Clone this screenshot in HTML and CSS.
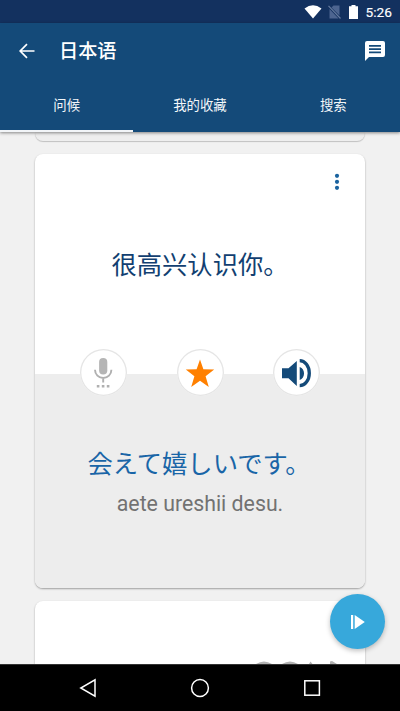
FILE: index.html
```html
<!DOCTYPE html>
<html lang="zh-CN">
<head>
<meta charset="utf-8">
<title>日本语</title>
<link rel="stylesheet" href="styles.css">
</head>
<body>
<div class="screen">
  <div class="status">
    <svg class="wifi" width="18" height="14" viewBox="0 0 18 14"><path d="M0.5 3.5Q9-2.8 17.5 3.5L9 13.5z" fill="#fff"/></svg>
    <svg class="sim" width="13" height="14" viewBox="0 0 13 14"><path d="M5.5 0.5H11.5V10.5L3.5 2.5zM1.5 4L10.5 13.5H1.5z" fill="#4d6590"/><path d="M0.5 0.8L12.5 13.5" stroke="#667b9f" stroke-width="1.2"/></svg>
    <svg class="battery" width="9" height="14" viewBox="0 0 9 14"><path d="M2.5 0h4v1.2H9V14H0V1.2h2.5z" fill="#fff"/></svg>
    <span class="clock">5:26</span>
  </div>
  <header class="appbar">
    <div class="toolbar">
      <svg class="back" width="16" height="16" viewBox="0 0 16 16"><path d="M15.5 8H1.5M8 1.2L1.2 8L8 14.8" fill="none" stroke="#fff" stroke-width="1.7"/></svg>
      <h1>日本语</h1>
      <svg class="chat" width="20" height="20" viewBox="0 0 20 20"><path fill="#fff" fill-rule="evenodd" d="M2 0h16a2 2 0 0 1 2 2v12a2 2 0 0 1-2 2H4l-4 4V2a2 2 0 0 1 2-2zM4 4v1.8h12V4zM4 7.2V9h12V7.2zM4 10.4v1.8h12v-1.8z"/></svg>
    </div>
    <nav class="tabs">
      <span class="tab active">问候</span>
      <span class="tab">我的收藏</span>
      <span class="tab">搜索</span>
    </nav>
  </header>
  <main class="list">
    <section class="card previous"></section>
    <section class="card phrase">
      <div class="source">
        <svg class="more" width="6" height="18" viewBox="0 0 6 18"><g fill="#1a639f"><circle cx="3" cy="2.8" r="2.1"/><circle cx="3" cy="8.8" r="2.1"/><circle cx="3" cy="14.8" r="2.1"/></g></svg>
        <p class="native">很高兴认识你。</p>
      </div>
      <div class="target">
        <p class="foreign" lang="ja">会えて嬉しいです。</p>
        <p class="reading">aete ureshii desu.</p>
      </div>
      <div class="actions">
        <span class="round"><svg viewBox="0 0 47 47"><rect x="19.1" y="9" width="8.2" height="16.500" rx="4.100" fill="#b5b5b5"/><path d="M15 20.800a8.200 8.200 0 0 0 16.400 0M23.200 28.500v5" fill="none" stroke="#b0b0b0" stroke-width="1.900"/><path d="M16.800 36h2.600v2.600h-2.600zM21.800 36h2.600v2.600h-2.600zM26.800 36h2.600v2.600h-2.600z" fill="#b0b0b0"/></svg></span>
        <span class="round"><svg viewBox="0 0 47 47"><path d="M23 10.5L26.4 20.3L37.2 20.5L28.6 27.2L31.800 38L23 31.700L14.200 38L17.400 27.200L8.800 20.500L19.600 20.300z" fill="#ff8000"/></svg></span>
        <span class="round"><svg viewBox="0 0 47 47"><path d="M9 19.200H15.500L23.800 12v25L15.500 29.300H9zM26.700 18c5.800 1.500 5.800 11.500 0 13z" fill="#144a79"/><path d="M26.700 11.700a9.600 12.500 0 0 1 0 25" fill="none" stroke="#144a79" stroke-width="3.300"/></svg></span>
      </div>
    </section>
    <section class="card next">
      <svg class="peek" width="84" height="3" viewBox="0 0 84 3"><path d="M0 3Q8-2 16 3zM26 3Q34-2 42 3zM53 3l1.500-2.500L56.500 3zM74 3V0.500L76 0l5 3z" fill="#b2b2b2"/></svg>
    </section>
    <span class="fab"><svg width="16" height="16" viewBox="0 0 16 16"><path d="M1 1h2.200v14H1zM4.700 1L14.800 8L4.700 15z" fill="#fff"/></svg></span>
  </main>
  <footer class="navbar">
    <svg width="18" height="20" viewBox="0 0 18 20"><path d="M16 1.800v16.400L1.800 10z"/></svg>
    <svg width="20" height="20" viewBox="0 0 20 20"><circle cx="10" cy="10" r="8.400"/></svg>
    <svg width="18" height="20" viewBox="0 0 18 20"><rect x="1.800" y="2.800" width="14.600" height="14.400"/></svg>
  </footer>
</div>
</body>
</html>
```
FILE: styles.css
```css
* { box-sizing: border-box; margin: 0; padding: 0; }
body { font-family: Roboto, "Noto Sans CJK SC", sans-serif; overflow: hidden; }
svg { display: block; }
.screen { width: 400px; height: 711px; display: flex; flex-direction: column; background: #f1f1f1; overflow: hidden; }

.status { height: 23px; flex: none; background: #13315f; display: flex; align-items: center; justify-content: flex-end; padding-right: 8px; color: #fff; }
.sim { margin-left: 6px; }
.battery { margin-left: 8px; }
.clock { margin-left: 8px; font-size: 13.7px; line-height: 24px; font-weight: 400; -webkit-text-stroke: .15px #fff; }

.appbar { height: 109px; flex: none; background: #144a79; color: #fff; position: relative; z-index: 2; box-shadow: 0 1px 3px rgba(0, 0, 0, .45); display: flex; flex-direction: column; }
.toolbar { height: 55px; display: flex; align-items: center; padding: 0 15px 0 19px; }
h1 { margin-left: 24px; padding-top: 3px; font-size: 19.2px; line-height: 28px; font-weight: 500; }
.chat { margin-left: auto; }
.tabs { flex: 1; display: grid; grid-template-columns: repeat(3, 1fr); }
.tab { text-align: center; font-size: 13.4px; line-height: 20px; padding-top: 18px; color: #f3f7fa; }
.tab.active { border-bottom: 2px solid #f2f5f8; }

.list { flex: 1; min-height: 0; overflow: hidden; position: relative; padding: 0 35px; }
.card { border-radius: 8px; background: #fff; box-shadow: 0 1px 2px rgba(0, 0, 0, .35); position: relative; }
.previous { height: 9px; border-radius: 0 0 8px 8px; background: #eee; box-shadow: 0 1px 1px rgba(0, 0, 0, .2); }
.phrase { margin-top: 13px; height: 434px; }
.source { height: 220px; padding: 19px 25px 0 0; display: flex; flex-direction: column; }
.more { align-self: flex-end; }
.native { margin: 56px -25px 0 0; text-align: center; font-size: 25.3px; line-height: 37px; color: #123f71; }
.target { height: 214px; background: #ededed; border-radius: 0 0 8px 8px; padding-top: 70px; text-align: center; }
.foreign { margin-left: -2px; font-family: "Noto Sans CJK JP", sans-serif; font-size: 25.3px; line-height: 37px; color: #1965a7; }
.reading { margin-top: 8px; font-size: 21.3px; line-height: 30px; color: #727272; }
.actions { position: absolute; top: 195px; left: 45px; right: 45px; display: flex; justify-content: space-between; }
.round { width: 47px; height: 47px; border-radius: 50%; background: #fff; box-shadow: inset 0 0 0 1.3px #e5e5e5; }
.round svg { width: 47px; height: 47px; }
.next { margin-top: 13px; height: 200px; }
.peek { position: absolute; left: 221px; top: 60px; }
.fab { position: absolute; right: 15px; top: 462px; width: 55px; height: 55px; border-radius: 50%; background: #37a8db; display: grid; place-items: center; box-shadow: 0 2px 5px rgba(0, 0, 0, .25); }

.navbar { height: 47px; flex: none; background: #000; border-top: 1px solid #333; display: flex; align-items: center; justify-content: space-between; padding: 0 79px; }
.navbar svg { fill: none; stroke: #fff; stroke-width: 1.5; }
```
